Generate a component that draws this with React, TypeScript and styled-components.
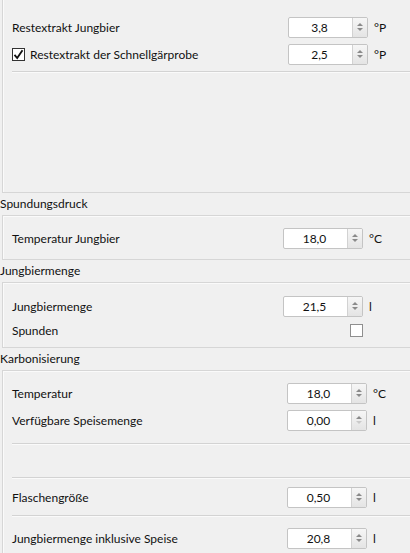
import styled, { createGlobalStyle } from "styled-components";

const GlobalStyle = createGlobalStyle`
  html, body {
    margin: 0;
    padding: 0;
    overflow: hidden;
    background: #f0f0f0;
  }
  body {
    font-family: Lato, "Liberation Sans", sans-serif;
    font-size: 12px;
    color: #111;
  }
`;

const StyledPage = styled.div`
  width: 410px;
  height: 553px;
  overflow: hidden;
`;

const StyledTitle = styled.div`
  height: 22px;
  line-height: 22px;
`;

const StyledFrame = styled.div<{ $right: number; $top: number; $bottom: number; $height?: number }>`
  margin-left: 2px;
  margin-right: -30px;
  border: 1px solid #d6d6d6;
  box-shadow: inset 1px 1px 0 #fafafa;
  padding: ${(p) => p.$top}px ${(p) => p.$right}px ${(p) => p.$bottom}px 9px;
  display: flex;
  flex-direction: column;
  gap: 5px;
  overflow: hidden;
  ${(p) => (p.$height ? `height: ${p.$height}px; box-sizing: border-box;` : "")}
`;

const StyledTopFrame = styled(StyledFrame)`
  margin-top: -4px;
`;

const StyledRow = styled.div<{ $h?: number }>`
  height: ${(p) => p.$h ?? 22}px;
  flex-shrink: 0;
  display: flex;
  align-items: center;
`;

const StyledLabel = styled.div`
  flex: 1;
  display: flex;
  align-items: center;
  gap: 5px;
`;

const StyledSpin = styled.div`
  width: 80px;
  height: 21px;
  display: flex;
  box-sizing: border-box;
  border: 1px solid #c4c4c4;
  border-radius: 2px;
  background: #fff;
  overflow: hidden;
`;

const StyledSpinValue = styled.div`
  flex: 1;
  text-align: center;
  line-height: 19px;
  padding-right: 2px;
`;

const StyledSpinButtons = styled.div`
  width: 14px;
  border-left: 1px solid #d2d2d2;
  background: linear-gradient(#f6f6f6, #e4e4e4);
  display: flex;
  flex-direction: column;
  align-items: center;
  justify-content: center;
  gap: 2px;
`;

const StyledArrow = styled.div<{ $down?: boolean; $dim?: boolean }>`
  width: 0;
  height: 0;
  border-left: 3.5px solid transparent;
  border-right: 3.5px solid transparent;
  ${(p) =>
    p.$down
      ? `border-top: 3px solid ${p.$dim ? "#cacaca" : "#8a8a8a"};`
      : `border-bottom: 3px solid ${p.$dim ? "#cacaca" : "#8a8a8a"};`}
`;

const StyledUnit = styled.div`
  width: 20px;
  margin-left: 6px;
`;

const StyledCheck = styled.div<{ $checked?: boolean }>`
  width: 13px;
  height: 13px;
  box-sizing: border-box;
  background: #fff;
  border: 1px solid ${(p) => (p.$checked ? "#333" : "#8f8f8f")};
  display: flex;
  align-items: center;
  justify-content: center;
`;

const StyledCheckSlot = styled.div`
  width: 80px;
  display: flex;
  justify-content: flex-end;
`;

const StyledSeparator = styled.div<{ $mt?: number; $mb?: number }>`
  height: 1px;
  flex-shrink: 0;
  background: #d3d3d3;
  border-bottom: 1px solid #fafafa;
  margin: ${(p) => p.$mt ?? 0}px -100px ${(p) => p.$mb ?? 0}px 0;
`;

const StyledGap = styled.div<{ $h: number }>`
  height: ${(p) => p.$h}px;
  flex-shrink: 0;
`;

const Tick = () => (
  <svg width="11" height="11" viewBox="0 0 11 11">
    <path d="M1.5 5.8 L4.2 9 L9.5 1.2" fill="none" stroke="#111" strokeWidth="1.8" />
  </svg>
);

interface ISpinRowProps {
  label: string;
  value: string;
  unit: string;
  checkbox?: boolean;
  atMin?: boolean;
}

const SpinRow = ({ label, value, unit, checkbox, atMin }: ISpinRowProps) => (
  <StyledRow>
    <StyledLabel>
      {checkbox && (
        <StyledCheck $checked>
          <Tick />
        </StyledCheck>
      )}
      {label}
    </StyledLabel>
    <StyledSpin>
      <StyledSpinValue>{value}</StyledSpinValue>
      <StyledSpinButtons>
        <StyledArrow />
        <StyledArrow $down $dim={atMin} />
      </StyledSpinButtons>
    </StyledSpin>
    <StyledUnit>{unit}</StyledUnit>
  </StyledRow>
);

const App = () => {
  return (
    <>
      <GlobalStyle />
      <StyledPage>
        <StyledTopFrame $top={19} $right={45} $bottom={0} $height={197}>
          <SpinRow label="Restextrakt Jungbier" value="3,8" unit="°P" />
          <SpinRow label="Restextrakt der Schnellgärprobe" value="2,5" unit="°P" checkbox />
          <StyledSeparator $mt={1} />
        </StyledTopFrame>

        <StyledTitle>Spundungsdruck</StyledTitle>
        <StyledFrame $top={11} $right={50} $bottom={10}>
          <SpinRow label="Temperatur Jungbier" value="18,0" unit="°C" />
        </StyledFrame>

        <StyledTitle>Jungbiermenge</StyledTitle>
        <StyledFrame $top={12} $right={50} $bottom={8}>
          <SpinRow label="Jungbiermenge" value="21,5" unit="l" />
          <StyledRow $h={17}>
            <StyledLabel>Spunden</StyledLabel>
            <StyledCheckSlot>
              <StyledCheck />
            </StyledCheckSlot>
            <StyledUnit />
          </StyledRow>
        </StyledFrame>

        <StyledTitle>Karbonisierung</StyledTitle>
        <StyledFrame $top={11} $right={46} $bottom={10}>
          <SpinRow label="Temperatur" value="18,0" unit="°C" />
          <SpinRow label="Verfügbare Speisemenge" value="0,00" unit="l" atMin />
          <StyledSeparator $mt={7} />
          <StyledGap $h={22} />
          <StyledSeparator $mb={2} />
          <SpinRow label="Flaschengröße" value="0,50" unit="l" />
          <StyledSeparator $mt={2} $mb={5} />
          <SpinRow label="Jungbiermenge inklusive Speise" value="20,8" unit="l" />
        </StyledFrame>
      </StyledPage>
    </>
  );
};

export default App;
